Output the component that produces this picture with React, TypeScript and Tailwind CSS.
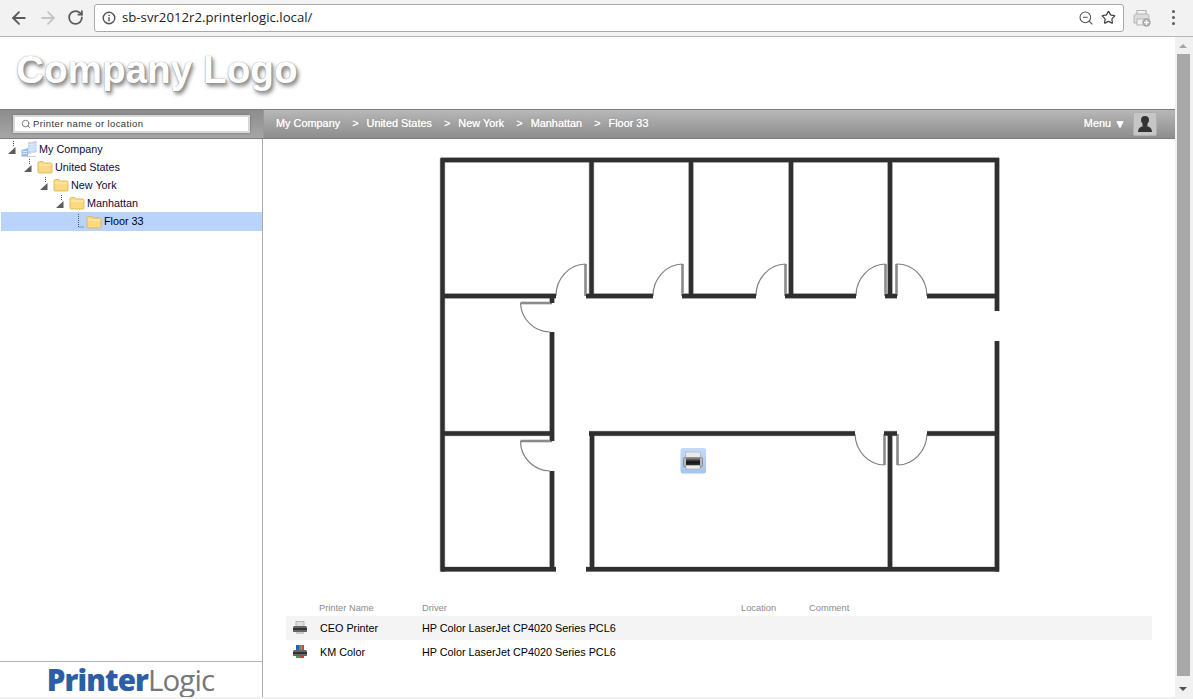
import { ArrowLeft, ArrowRight, RotateCw, Search, Star, ZoomOut } from 'lucide-react';

// Arbre des emplacements
const TREE = [
  { name: 'My Company', level: 0, icon: 'building' },
  { name: 'United States', level: 1, icon: 'folder' },
  { name: 'New York', level: 2, icon: 'folder' },
  { name: 'Manhattan', level: 3, icon: 'folder' },
  { name: 'Floor 33', level: 4, icon: 'folder', selected: true },
];

const CRUMBS = ['My Company', 'United States', 'New York', 'Manhattan', 'Floor 33'];

const PRINTERS = [
  { name: 'CEO Printer', driver: 'HP Color LaserJet CP4020 Series PCL6', color: false },
  { name: 'KM Color', driver: 'HP Color LaserJet CP4020 Series PCL6', color: true },
];

// Murs du plan, en coordonnées de page
const WALLS = [
  'M441 160H999',
  'M442.5 158V571.5',
  'M997 158V311',
  'M997 341V571.5',
  'M441 569.3H556',
  'M586 569.3H999',
  'M443 296H556',
  'M586 296H653',
  'M682 296H756',
  'M785 296H856',
  'M885 296H897',
  'M927 296H997',
  'M591.5 160V296',
  'M691 160V296',
  'M791 160V296',
  'M890 160V296',
  'M552 296V303',
  'M552 332V434',
  'M443 433.5H554',
  'M552 433.5V441',
  'M552 471V571',
  'M589 433.5H855',
  'M884 433.5H897',
  'M927 433.5H997',
  'M592 433.5V571',
  'M890 433.5V571',
];

// Portes : battant + arc
const DOORS = [
  { leaf: 'M585.5 296V264', arc: 'M585.5 264A30 32 0 0 0 556 296' },
  { leaf: 'M682.5 296V264', arc: 'M682.5 264A30 32 0 0 0 653 296' },
  { leaf: 'M785.5 296V264', arc: 'M785.5 264A30 32 0 0 0 756 296' },
  { leaf: 'M885.5 296V264', arc: 'M885.5 264A30 32 0 0 0 856 296' },
  { leaf: 'M896.5 296V264', arc: 'M896.5 264A30 32 0 0 1 927 296' },
  { leaf: 'M552 303H520.5', arc: 'M520.5 303A30 30 0 0 0 550 332' },
  { leaf: 'M552 441H520.5', arc: 'M520.5 441A30 30 0 0 0 550 471' },
  { leaf: 'M884.5 434V465', arc: 'M884.5 465A30 32 0 0 1 855 434' },
  { leaf: 'M897.5 434V465', arc: 'M897.5 465A30 32 0 0 0 927 434' },
];

function TreeToggle({ open }: { open: boolean }) {
  return (
    <svg width="16" height="16" viewBox="0 0 16 16" className="shrink-0">
      <path d="M8.5 0V6" stroke="#555" strokeWidth="1" strokeDasharray="1 1" />
      {open ? (
        <path d="M10.5 6V13H3Z" fill="#5c5c5c" />
      ) : (
        <path d="M8.5 6V13H14" stroke="#555" strokeWidth="1" strokeDasharray="1 1" fill="none" />
      )}
    </svg>
  );
}

function FolderIcon() {
  return (
    <svg width="16" height="14" viewBox="0 0 16 14" className="shrink-0">
      <path d="M1 3C1 2 1.5 1.5 2.5 1.5H6L7.5 3H13.5C14.5 3 15 3.5 15 4.5V12C15 12.8 14.5 13 13.8 13H2.2C1.5 13 1 12.8 1 12Z" fill="#fbd982" stroke="#d9b04c" strokeWidth="0.8" />
      <path d="M1.5 5H14.5" stroke="#ffeeb8" strokeWidth="1" />
    </svg>
  );
}

function BuildingIcon() {
  return (
    <svg width="16" height="16" viewBox="0 0 16 16" className="shrink-0">
      <path d="M7 1.5L15.5 0V11L7 13Z" fill="#b4cdf0" />
      <path d="M9 1.5V12M11 1V12M13 1V11M7 4L15.5 2.8M7 6.5L15.5 5.3M7 9L15.5 7.8" stroke="#eef4fc" strokeWidth="0.7" />
      <path d="M0.5 9L7 7V15H0.5Z" fill="#9dbde9" />
      <path d="M0.5 15.5H15" stroke="#c6d2e2" strokeWidth="1" />
      <path d="M1.5 10.5H6M1.5 12.5H6" stroke="#eef4fc" strokeWidth="0.8" />
    </svg>
  );
}

function RowPrinterIcon({ color }: { color: boolean }) {
  return (
    <svg width="16" height="14" viewBox="0 0 16 14">
      {color ? (
        <>
          <rect x="4" y="0" width="3" height="5" fill="#3a57b8" />
          <rect x="7" y="0" width="2.5" height="5" fill="#4a9a58" />
          <rect x="9.5" y="0" width="2.5" height="5" fill="#c24a4a" />
        </>
      ) : (
        <rect x="4" y="0.5" width="8" height="5" fill="#dedede" stroke="#999" strokeWidth="0.6" />
      )}
      <path d="M1 6.5C1 5.5 2 5 3 5H13C14 5 15 5.5 15 6.5V11H1Z" fill="#666" />
      <rect x="1" y="7" width="14" height="2" fill="#333" />
      <path d="M4 11H12V13H4Z" fill={color ? '#d03a3a' : '#c9c9c9'} />
      {color && <path d="M4 11H8V13H4Z" fill="#3aa04d" />}
    </svg>
  );
}

function FloorPlan() {
  return (
    <svg width="580" height="430" viewBox="430 150 580 430" className="ml-[167px] mt-[11px] block shrink-0">
      {DOORS.map((d) => (
        <g key={d.leaf} fill="none">
          <path d={d.leaf} stroke="#8a8a8a" strokeWidth="2.6" />
          <path d={d.arc} stroke="#808080" strokeWidth="1.2" />
        </g>
      ))}
      {WALLS.map((d) => (
        <path key={d} d={d} fill="none" stroke="#c4c4c4" strokeWidth="5.6" />
      ))}
      {WALLS.map((d) => (
        <path key={`${d}-core`} d={d} fill="none" stroke="#2f2f2f" strokeWidth="4.4" />
      ))}
      {/* Imprimante placée sur le plan */}
      <defs>
        <linearGradient id="pinBg" x1="0" y1="0" x2="0" y2="1">
          <stop offset="0" stopColor="#c4daf9" />
          <stop offset="1" stopColor="#a3c4f2" />
        </linearGradient>
        <linearGradient id="pinBody" x1="0" y1="0" x2="0" y2="1">
          <stop offset="0" stopColor="#9a9a9a" />
          <stop offset="0.6" stopColor="#111" />
          <stop offset="1" stopColor="#333" />
        </linearGradient>
      </defs>
      <rect x="680.5" y="448" width="25.5" height="25.5" rx="2.5" fill="url(#pinBg)" />
      <rect x="685.5" y="452" width="15" height="6" fill="#e8e8e8" stroke="#aaa" strokeWidth="0.6" />
      <rect x="683.5" y="457.5" width="19" height="9.5" rx="1.5" fill="#b9b9b9" stroke="#777" strokeWidth="0.7" />
      <rect x="686" y="457.5" width="14" height="7.5" fill="url(#pinBody)" />
      <rect x="686" y="465.5" width="14" height="3.5" fill="#eeeeee" stroke="#999" strokeWidth="0.5" />
    </svg>
  );
}

export default function App() {
  return (
    <div className="flex h-[699px] w-[1193px] flex-col overflow-hidden bg-white font-['Liberation_Sans',Arial,sans-serif] text-[10.8px] text-black">
      {/* Barre du navigateur */}
      <div className="flex h-[37px] shrink-0 items-center border-b border-[#b5b5b5] bg-[#f2f2f2] pl-[9px] pb-[1px]">
        <ArrowLeft size={20} strokeWidth={2.2} className="text-[#5a5a5a]" />
        <ArrowRight size={20} strokeWidth={2.2} className="ml-[9px] text-[#c6c6c6]" />
        <RotateCw size={17} strokeWidth={2.5} className="ml-[9px] text-[#5a5a5a]" />
        <div className="ml-[10px] flex h-[28px] w-[1030px] items-center rounded-[3px] border border-[#a9a9a9] bg-white pl-[7px] pr-[6px]">
          <svg width="14" height="14" viewBox="0 0 14 14" className="shrink-0">
            <circle cx="7" cy="7" r="5.8" fill="none" stroke="#555" strokeWidth="1.4" />
            <path d="M7 6.2V10.2M7 3.8V5" stroke="#555" strokeWidth="1.5" />
          </svg>
          <span className="ml-[6px] font-['Open_Sans',sans-serif] text-[13.2px] text-[#222]">
            sb-svr2012r2.printerlogic.local/
          </span>
          <ZoomOut size={16} strokeWidth={1.6} className="ml-auto text-[#555]" />
          <Star size={15} strokeWidth={2} className="ml-[7px] mr-[1px] text-[#444]" />
        </div>
        <svg width="18" height="18" viewBox="0 0 18 18" className="ml-[9px] shrink-0">
          <path d="M4 5V1.5H13V5" fill="none" stroke="#b4b4b4" strokeWidth="1.2" />
          <path d="M1 7C1 6 2 5 3 5H14C15 5 16 6 16 7V14H1Z" fill="#dcdcdc" stroke="#b4b4b4" strokeWidth="1" />
          <rect x="4" y="10" width="9" height="6" fill="#f2f2f2" stroke="#b4b4b4" strokeWidth="1" />
          <circle cx="13.5" cy="13.5" r="4.2" fill="#a8a8a8" />
          <path d="M13.5 11V16M11 13.5H16" stroke="#fff" strokeWidth="1.4" />
        </svg>
        <div className="ml-[21px] flex flex-col gap-[3px]">
          <span className="h-[3px] w-[3px] rounded-full bg-[#5a5a5a]" />
          <span className="h-[3px] w-[3px] rounded-full bg-[#5a5a5a]" />
          <span className="h-[3px] w-[3px] rounded-full bg-[#5a5a5a]" />
        </div>
      </div>

      <div className="flex min-h-0 flex-1">
        <div className="flex min-w-0 flex-1 flex-col">
          {/* Logo */}
          <div className="flex h-[72px] shrink-0 items-center pb-[6px] pl-[16px]">
            <span className="text-[38.7px] leading-none font-bold text-white [text-shadow:0_0_1px_#888,1px_1px_1px_#999,2px_3px_4px_#777]">
              Company Logo
            </span>
          </div>

          {/* Barres grises */}
          <div className="flex h-[30px] shrink-0">
            <div className="flex w-[263px] items-center border-y border-[#7d7d7d] bg-gradient-to-b from-[#8d8d8d] to-[#a6a6a6] pl-[13px]">
              <div className="flex h-[18px] w-[237px] items-center border-2 border-[#d8d8d8] bg-white pl-[6px] text-[9.5px] tracking-[0.4px] text-[#333] shadow-[0_0_2px_#666]">
                <Search size={10} strokeWidth={2.2} className="mr-[2px] text-[#777]" />
                Printer name or location
              </div>
            </div>
            <div className="flex flex-1 items-center border-y border-[#7d7d7d] border-l border-l-[#9a9a9a] bg-gradient-to-b from-[#b8b8b8] to-[#8d8d8d] pl-[12px] pr-[18px] pb-[1px] text-[10.9px] text-white [text-shadow:0_0_1px_#fff,0_0_2px_#777]">
              {CRUMBS.map((crumb, i) => (
                <span key={crumb} className="flex">
                  {i > 0 && <span className="ml-[12px] mr-[8px]">&gt;</span>}
                  {crumb}
                </span>
              ))}
              <span className="ml-auto">Menu</span>
              <span className="ml-[3px] text-[12px] leading-none">▼</span>
              <div className="ml-[7px] flex h-[24px] w-[24px] items-center justify-center rounded-[2px] border border-[#b0b0b0] bg-[#c6c6c6]">
                <svg width="16" height="18" viewBox="0 0 16 18">
                  <circle cx="8" cy="5" r="4" fill="#333" />
                  <rect x="5.5" y="7" width="5" height="4" fill="#333" />
                  <path d="M1 17C1 13 4 11 8 11C12 11 15 13 15 17Z" fill="#333" />
                </svg>
              </div>
            </div>
          </div>

          <div className="flex min-h-0 flex-1">
            {/* Panneau latéral */}
            <aside className="flex w-[263px] shrink-0 flex-col border-r border-[#a8a8a8]">
              <div className="flex-1 pt-[1px]">
                {TREE.map((node) => (
                  <div
                    key={node.name}
                    className={`flex items-center ${node.selected ? 'ml-[1px] h-[19px] bg-[#b9d3fb] text-black' : 'h-[18px] text-[#0b0b3b]'}`}
                  >
                    <div className={`flex items-center ${
                      node.level === 0 ? 'pl-[5px]' : node.level === 1 ? 'pl-[21px]' : node.level === 2 ? 'pl-[37px]' : node.level === 3 ? 'pl-[53px]' : 'pl-[69px]'
                    }`}>
                      <TreeToggle open={!node.selected} />
                      {node.icon === 'building' ? <BuildingIcon /> : <FolderIcon />}
                    </div>
                    <span className="ml-[2px]">{node.name}</span>
                  </div>
                ))}
              </div>
              <div className="flex h-[36px] items-center justify-center border-t border-[#b5b5b5] pr-[1px] font-['Open_Sans',sans-serif] text-[29.5px] leading-none tracking-[-0.9px]">
                <span className="font-extrabold text-[#2c5ea8]">Printer</span>
                <span className="text-[#75787b]">Logic</span>
              </div>
            </aside>

            {/* Plan et liste */}
            <main className="flex min-w-0 flex-1 flex-col">
              <FloorPlan />
              <div className="ml-[23px] mt-[21px] w-[866px]">
                <div className="grid h-[15px] grid-cols-[33px_103px_319px_68px_1fr] items-center text-[9.3px] text-[#8a8a8a]">
                  <span />
                  <span>Printer Name</span>
                  <span>Driver</span>
                  <span>Location</span>
                  <span>Comment</span>
                </div>
                {PRINTERS.map((p, i) => (
                  <div
                    key={p.name}
                    className={`grid h-[24px] grid-cols-[34px_102px_1fr] items-center ${i === 0 ? 'bg-[#f4f4f4]' : ''}`}
                  >
                    <span className="pl-[6px]">
                      <RowPrinterIcon color={p.color} />
                    </span>
                    <span>{p.name}</span>
                    <span>{p.driver}</span>
                  </div>
                ))}
              </div>
            </main>
          </div>
          <div className="h-[2px] shrink-0 bg-[#f1f1f1]" />
        </div>

        {/* Barre de défilement */}
        <div className="flex w-[18px] shrink-0 flex-col items-start bg-[#f1f1f1] pl-[2px]">
          <div className="ml-[2px] mt-[7px] h-0 w-0 border-x-[4px] border-b-[4px] border-x-transparent border-b-[#a3a3a3]" />
          <div className="mt-[6px] h-[622px] w-[13px] bg-[#a8a8a8]" />
          <div className="ml-[2px] mt-[11px] h-0 w-0 border-x-[4px] border-t-[4px] border-x-transparent border-t-[#505050]" />
        </div>
      </div>
    </div>
  );
}
